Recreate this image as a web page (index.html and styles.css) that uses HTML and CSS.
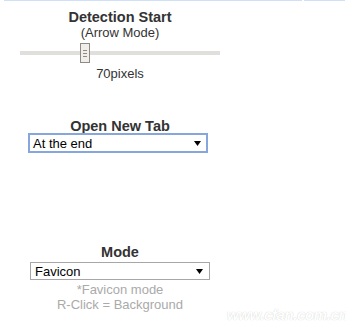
FILE: index.html
```html
<!DOCTYPE html>
<html>
<head>
<meta charset="utf-8">
<link rel="stylesheet" href="styles.css">
</head>
<body>
<div class="topline"><span class="seg seg-a"></span><span class="seg seg-b"></span></div>
<div class="panel">
  <div class="title">Detection Start</div>
  <div class="sub">(Arrow Mode)</div>
  <div class="slider">
    <div class="track"></div>
    <div class="thumb"><span></span><span></span><span></span></div>
  </div>
  <div class="value">70pixels</div>

  <div class="title title-tab">Open New Tab</div>
  <div class="select select-focus">
    <span class="sel-text">At the end</span>
    <svg class="arrow" width="7" height="5" viewBox="0 0 7 5"><path d="M0 0H7L3.5 5Z" fill="#000"/></svg>
  </div>

  <div class="title title-mode">Mode</div>
  <div class="select select-plain">
    <span class="sel-text">Favicon</span>
    <svg class="arrow" width="7" height="5" viewBox="0 0 7 5"><path d="M0 0H7L3.5 5Z" fill="#000"/></svg>
  </div>
  <div class="note note-first">*Favicon mode</div>
  <div class="note">R-Click = Background</div>
</div>
<div class="watermark">www.cfan.com.cn</div>
</body>
</html>
```
FILE: styles.css
```css
html, body {
  margin: 0;
  padding: 0;
  background: #fff;
}
body {
  width: 346px;
  height: 329px;
  overflow: hidden;
  position: relative;
  font-family: "Liberation Sans", Arial, sans-serif;
  color: #333;
}
.topline {
  display: flex;
  height: 1px;
}
.seg {
  display: block;
  height: 1px;
  background: #cfe1f8;
}
.seg-a {
  margin-left: 4px;
  width: 298px;
}
.seg-b {
  margin-left: 2px;
  width: 41px;
}
.panel {
  width: 200px;
  margin-left: 20px;
  padding-top: 9px;
  display: flex;
  flex-direction: column;
  align-items: center;
}
.title {
  font-size: 14.5px;
  font-weight: bold;
  line-height: 15px;
  color: #333;
}
.sub, .value {
  font-size: 13px;
  line-height: 15px;
  color: #333;
}
.slider {
  position: relative;
  width: 200px;
  height: 20px;
  margin-top: 3px;
  display: flex;
  align-items: center;
}
.track {
  width: 200px;
  height: 4px;
  background: #e1dfdc;
}
.thumb {
  position: absolute;
  left: 60px;
  top: 0;
  width: 8px;
  height: 18px;
  border: 1px solid #8f8a83;
  background: #efeeec;
  display: flex;
  flex-direction: column;
  align-items: center;
  justify-content: center;
  gap: 2px;
}
.thumb span {
  display: block;
  width: 4px;
  height: 1px;
  background: #8f8a83;
}
.value {
  margin-top: 3px;
}
.title-tab {
  margin-top: 38px;
}
.select {
  width: 180px;
  box-sizing: border-box;
  display: flex;
  align-items: center;
  justify-content: space-between;
  background: #fff;
  font-size: 13px;
  color: #000;
}
.select-focus {
  height: 20px;
  margin-top: -1px;
  margin-right: 4px;
  border: 2px solid #86a6dc;
  padding: 0 5px 0 3px;
}
.select-plain {
  height: 18px;
  margin-top: 2px;
  border: 1px solid #a7a7a7;
  padding: 0 6px 0 4px;
}
.sel-text {
  line-height: 15px;
}
.arrow {
  display: block;
}
.title-mode {
  margin-top: 92px;
}
.note {
  font-size: 13px;
  line-height: 15px;
  color: #aaa;
}
.note-first {
  margin-top: 2px;
}
.watermark {
  position: absolute;
  left: 227px;
  top: 306px;
  width: 118px;
  white-space: nowrap;
  font-size: 15px;
  font-weight: bold;
  font-style: italic;
  color: #fff;
  text-shadow: 0 0 1px #c4c4c4;
  letter-spacing: -0.4px;
}
```
